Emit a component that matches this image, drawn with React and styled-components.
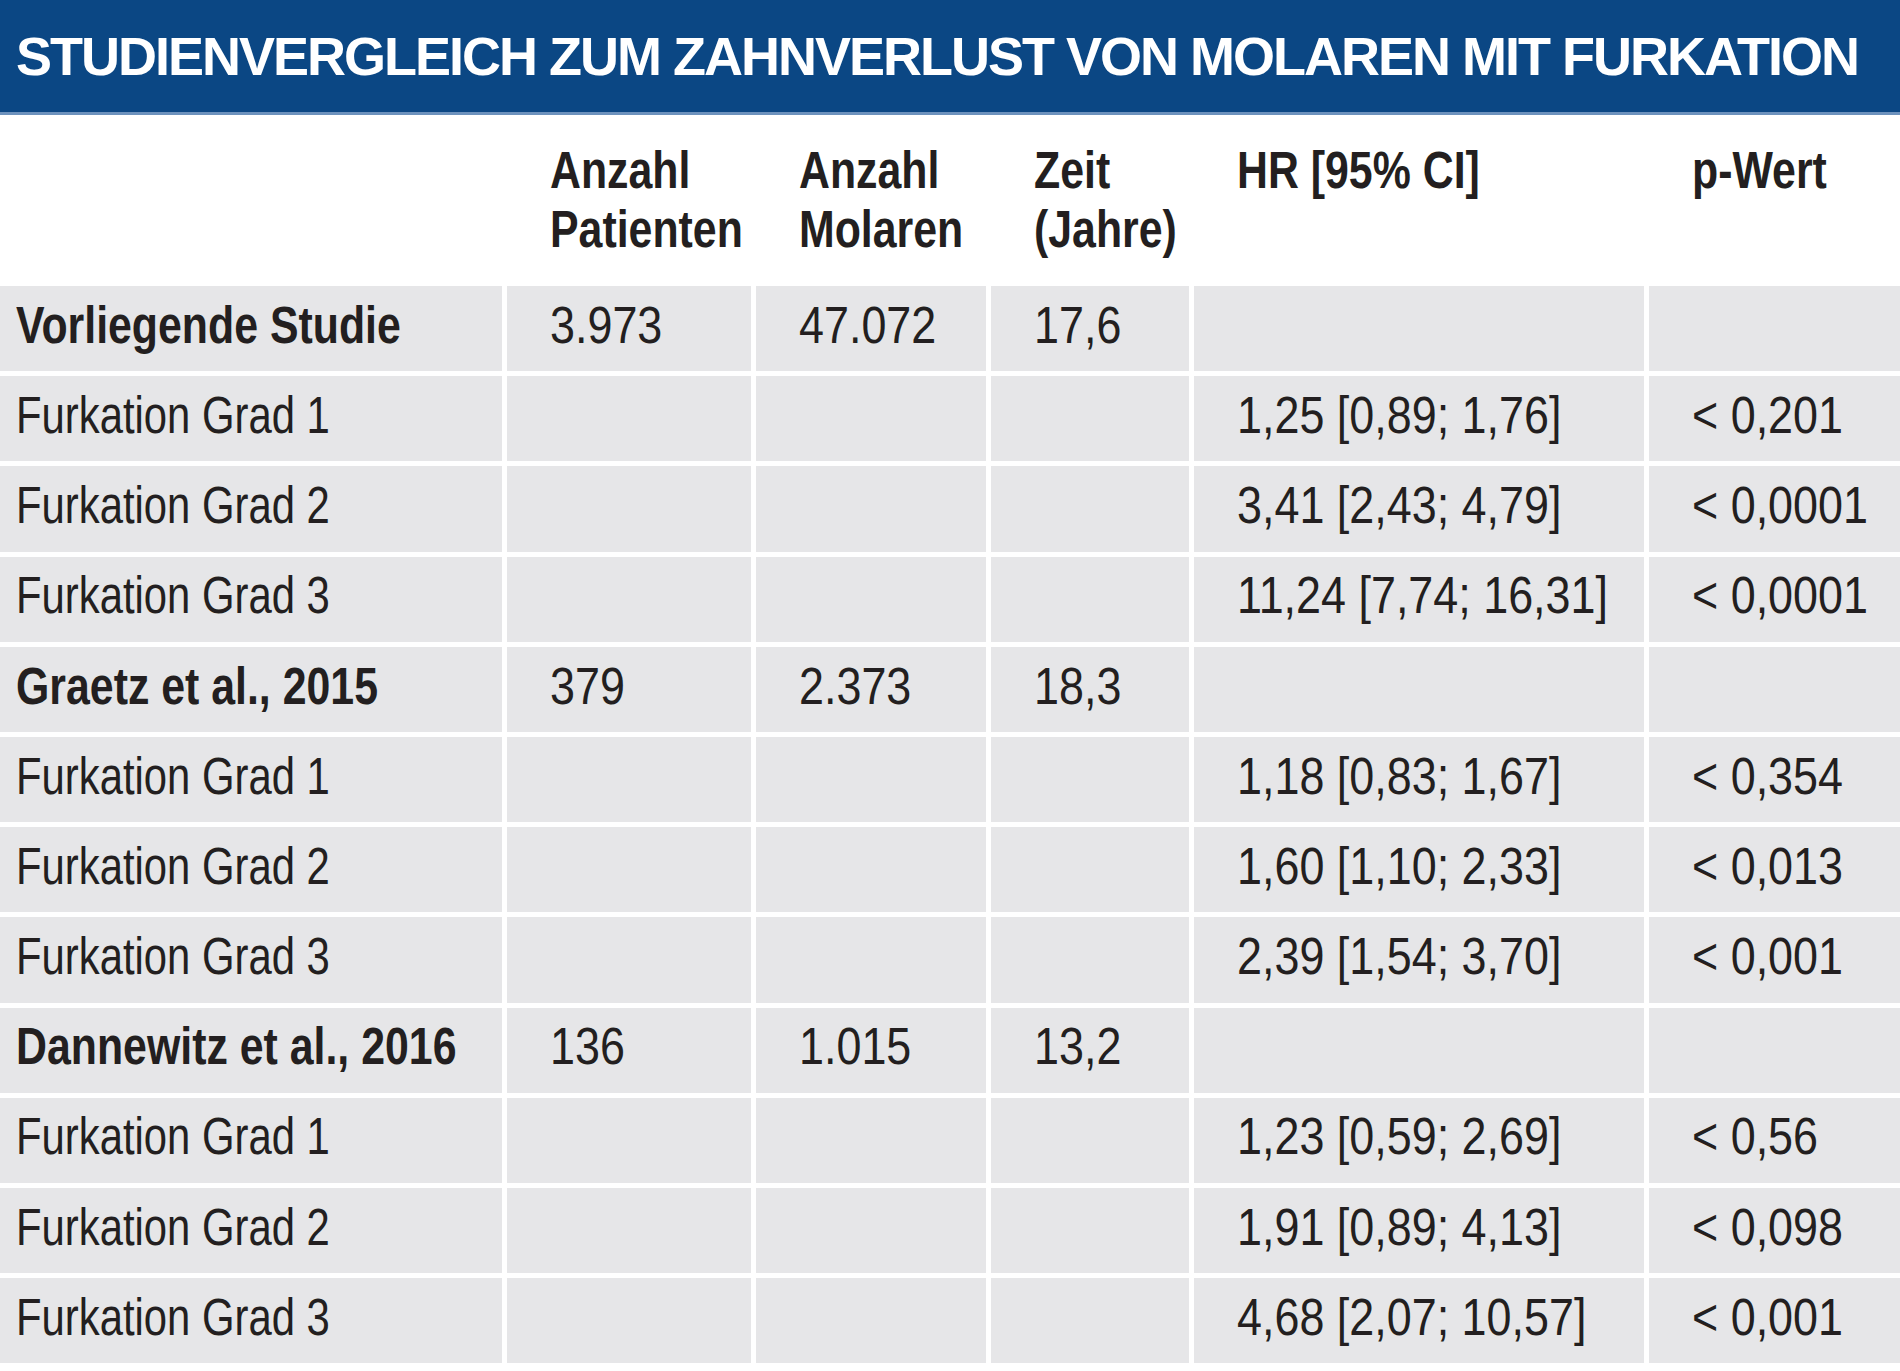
import React from "react";
import styled, { createGlobalStyle } from "styled-components";

const GlobalStyle = createGlobalStyle`
  html, body {
    margin: 0;
    padding: 0;
    background: #ffffff;
  }
  body {
    font-family: "Liberation Sans", Arial, sans-serif;
    color: #231f20;
  }
`;

const Page = styled.div`
  width: 1900px;
  background: #ffffff;
`;

const TitleBar = styled.div`
  height: 112px;
  display: flex;
  align-items: center;
  padding-left: 16px;
  background: #0b4784;
  border-bottom: 3px solid #6d92bd;
  box-sizing: content-box;
`;

const Title = styled.h1`
  margin: 0;
  font-family: "Liberation Sans", Arial, sans-serif;
  font-weight: 700;
  font-size: 54px;
  line-height: 1;
  letter-spacing: -2px;
  color: #ffffff;
  white-space: nowrap;
`;

const Table = styled.div`
  display: grid;
  grid-template-columns: 502px 244px 230px 198px 450px 1fr;
  grid-template-rows: 166px repeat(12, 85.2px);
  column-gap: 5px;
  row-gap: 5px;
`;

/* the printed table uses a condensed face; squeeze the text to match */
const Squeeze = styled.span`
  display: inline-block;
  white-space: nowrap;
  transform: scaleX(${(p) => p.$x});
  transform-origin: 0 50%;
`;

const HeadCell = styled.div`
  padding: 26px 0 0 ${(p) => (p.$first ? "16px" : "43px")};
  font-weight: 700;
  font-size: 51px;
  line-height: 59px;
  white-space: nowrap;
`;

const Cell = styled.div`
  display: flex;
  align-items: center;
  padding: 0 0 5px ${(p) => (p.$first ? "16px" : "43px")};
  background: #e6e6e8;
  font-weight: ${(p) => (p.$bold ? 700 : 400)};
  font-size: 51px;
  line-height: 1.15;
  white-space: nowrap;
`;

const headers = [
  [],
  ["Anzahl", "Patienten"],
  ["Anzahl", "Molaren"],
  ["Zeit", "(Jahre)"],
  ["HR [95% CI]"],
  ["p-Wert"],
];

const studies = [
  {
    name: "Vorliegende Studie",
    patients: "3.973",
    molars: "47.072",
    years: "17,6",
    grades: [
      ["1,25 [0,89; 1,76]", "< 0,201"],
      ["3,41 [2,43; 4,79]", "< 0,0001"],
      ["11,24 [7,74; 16,31]", "< 0,0001"],
    ],
  },
  {
    name: "Graetz et al., 2015",
    patients: "379",
    molars: "2.373",
    years: "18,3",
    grades: [
      ["1,18 [0,83; 1,67]", "< 0,354"],
      ["1,60 [1,10; 2,33]", "< 0,013"],
      ["2,39 [1,54; 3,70]", "< 0,001"],
    ],
  },
  {
    name: "Dannewitz et al., 2016",
    patients: "136",
    molars: "1.015",
    years: "13,2",
    grades: [
      ["1,23 [0,59; 2,69]", "< 0,56"],
      ["1,91 [0,89; 4,13]", "< 0,098"],
      ["4,68 [2,07; 10,57]", "< 0,001"],
    ],
  },
];

const Num = ({ children }) => (
  <Cell>{children && <Squeeze $x={0.88}>{children}</Squeeze>}</Cell>
);

const StudyRows = ({ study }) => (
  <>
    <Cell $first $bold>
      <Squeeze $x={0.84}>{study.name}</Squeeze>
    </Cell>
    <Num>{study.patients}</Num>
    <Num>{study.molars}</Num>
    <Num>{study.years}</Num>
    <Num />
    <Num />
    {study.grades.map(([hr, p], i) => (
      <React.Fragment key={i}>
        <Cell $first>
          <Squeeze $x={0.82}>Furkation Grad {i + 1}</Squeeze>
        </Cell>
        <Num />
        <Num />
        <Num />
        <Num>{hr}</Num>
        <Num>{p}</Num>
      </React.Fragment>
    ))}
  </>
);

export default function App() {
  return (
    <Page>
      <GlobalStyle />
      <TitleBar>
        <Title>STUDIENVERGLEICH ZUM ZAHNVERLUST VON MOLAREN MIT FURKATION</Title>
      </TitleBar>
      <Table>
        {headers.map((h, i) => (
          <HeadCell key={i} $first={i === 0}>
            {h.map((line) => (
              <div key={line}>
                <Squeeze $x={0.84}>{line}</Squeeze>
              </div>
            ))}
          </HeadCell>
        ))}
        {studies.map((s) => (
          <StudyRows key={s.name} study={s} />
        ))}
      </Table>
    </Page>
  );
}
